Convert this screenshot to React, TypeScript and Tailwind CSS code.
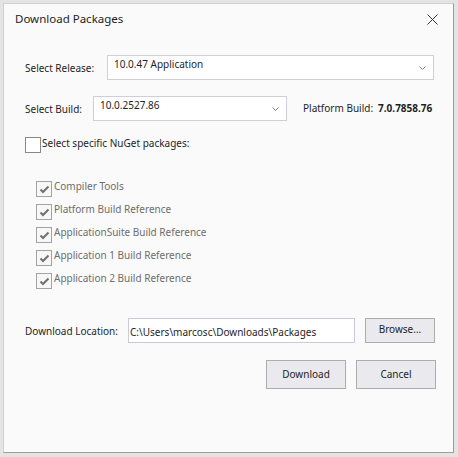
import React from 'react';

const font = { fontFamily: '"Noto Sans", "Open Sans", sans-serif' };

function Chevron() {
    return (
        <svg width="7" height="4" viewBox="0 0 7 4" className="text-[#808080]">
            <path d="M0.5 0.5 L3.5 3.5 L6.5 0.5" fill="none" stroke="currentColor" strokeWidth="1" />
        </svg>
    );
}

function Combo({ value, width }: { value: string; width: string }) {
    return (
        <div className={`${width} shrink-0 h-[25px] bg-white border border-[#cfcfd8] flex items-start justify-between pl-[6px] pr-[7px]`}>
            <span className="pt-[1px] text-[10px] text-[#1e1e1e]">{value}</span>
            <span className="pt-[10px] flex">
                <Chevron />
            </span>
        </div>
    );
}

function DisabledCheck({ label }: { label: string }) {
    return (
        <div className="h-[23px] flex items-start">
            <div className="w-[16px] h-[16px] shrink-0 border border-[#a3a3a3] bg-[#f7f7f7] flex items-center justify-center">
                <svg width="11" height="9" viewBox="0 0 11 9">
                    <path d="M1.5 4.5 L4 7 L9.5 1.5" fill="none" stroke="#707070" strokeWidth="2" />
                </svg>
            </div>
            <span className="ml-[2px] -mt-[2px] whitespace-nowrap text-[#6d6d6d]">{label}</span>
        </div>
    );
}

export default function App() {
    const packages = [
        'Compiler Tools',
        'Platform Build Reference',
        'ApplicationSuite Build Reference',
        'Application 1 Build Reference',
        'Application 2 Build Reference',
    ];

    return (
        <div className="w-[458px] h-[457px] bg-[#e4e4e4] pt-[3px] pl-[3px] pr-[4px] pb-[4px]" style={font}>
            <div className="w-full h-full bg-[#fafafa] border-l border-t border-[#d0d0d0] border-r-[#9e9e9e] border-b-[#9e9e9e] border-r border-b flex flex-col text-[#1e1e1e]">
                <div className="h-[30px] flex items-center justify-between pl-[11px] pr-[15px]">
                    <span className="text-[11.5px]">Download Packages</span>
                    <svg width="11" height="11" viewBox="0 0 11 11">
                        <path d="M0.5 0.5 L10.5 10.5 M10.5 0.5 L0.5 10.5" stroke="#333" strokeWidth="1" />
                    </svg>
                </div>

                <div className="pl-[21px] flex flex-col text-[10px]">
                    <div className="mt-[21px] flex items-center">
                        <span className="w-[82px] shrink-0 whitespace-nowrap pt-[1px]">Select Release:</span>
                        <Combo value="10.0.47 Application" width="w-[327px]" />
                    </div>

                    <div className="mt-[16px] flex items-center whitespace-nowrap">
                        <span className="w-[68px] shrink-0 pt-[1px]">Select Build:</span>
                        <Combo value="10.0.2527.86" width="w-[194px]" />
                        <span className="ml-[16px]">Platform Build:</span>
                        <span className="ml-[5px] font-bold">7.0.7858.76</span>
                    </div>

                    <div className="mt-[16px] flex items-start">
                        <div className="w-[16px] h-[16px] shrink-0 border border-[#888] bg-white" />
                        <span className="ml-[1px] -mt-[1px] whitespace-nowrap">Select specific NuGet packages:</span>
                    </div>

                    <div className="mt-[28px] ml-[11px] flex flex-col">
                        {packages.map((p) => (
                            <DisabledCheck key={p} label={p} />
                        ))}
                    </div>

                    <div className="mt-[22px] flex items-center whitespace-nowrap">
                        <span className="w-[103px] shrink-0 pt-[2px]">Download Location:</span>
                        <div className="w-[227px] shrink-0 h-[25px] bg-white border border-[#cacade] flex items-center pl-[1px]">
                            <span className="pt-[3px]">C:\Users\marcosc\Downloads\Packages</span>
                        </div>
                        <button className="ml-[10px] w-[70px] shrink-0 h-[25px] bg-[#e9e9ee] border border-[#adadad] flex items-center justify-center pb-[2px]">
                            Browse...
                        </button>
                    </div>

                    <div className="mt-[17px] flex justify-end pr-[17px] gap-[10px]">
                        <button className="w-[80px] h-[29px] bg-[#e9e9ee] border border-[#adadad]">Download</button>
                        <button className="w-[80px] h-[29px] bg-[#e9e9ee] border border-[#adadad]">Cancel</button>
                    </div>
                </div>
            </div>
        </div>
    );
}
